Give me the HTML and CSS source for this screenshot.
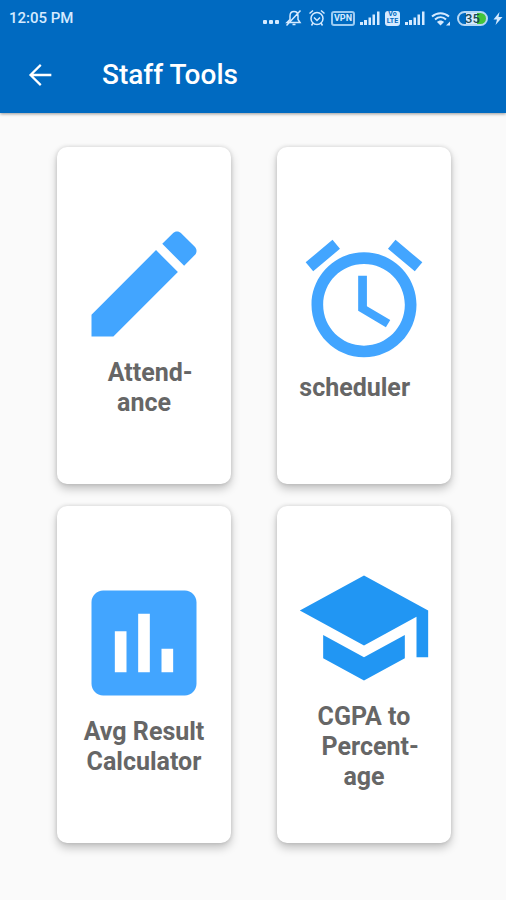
FILE: index.html
```html
<!DOCTYPE html>
<html lang="en">

<head>
    <meta charset="UTF-8">
    <meta name="viewport" content="width=device-width, initial-scale=1.0">
    <title>Staff Tools</title>
    <link rel="stylesheet" href="styles.css">
</head>

<body>
    <header class="header">
        <div class="status">
            <span class="status-time">12:05 PM</span>
            <div class="status-icons">
                <svg width="18" height="18" viewBox="0 0 18 18" fill="currentColor">
                    <rect x="1" y="11" width="4" height="4" rx="1" />
                    <rect x="7" y="11" width="4" height="4" rx="1" />
                    <rect x="13" y="11" width="4" height="4" rx="1" />
                </svg>
                <!-- muted bell -->
                <svg width="18" height="18" viewBox="0 0 18 18" fill="none" stroke="currentColor" stroke-width="1.5">
                    <path d="M2 13.500h13l-2-3V7c0-2.500-1.500-4.500-4-4.500S5 4.500 5 7v3.500zM7.500 15.500h3M1.500 16.500L15.500 1.500" />
                </svg>
                <!-- alarm -->
                <svg width="18" height="18" viewBox="0 0 18 18" fill="none" stroke="currentColor" stroke-width="1.5">
                    <circle cx="9" cy="9.500" r="6" />
                    <path d="M1.500 4.500L5 1.500M13 1.500l3.500 3M6 8.500l3 3L12 8.500M5 14l-1.500 2.500M13 14l1.500 2.500" />
                </svg>
                <span class="vpn">VPN</span>
                <svg width="20" height="18" viewBox="0 0 20 18" fill="currentColor">
                    <path d="M0 13h3v3H0zM4 11h3v5H4zM8.500 8.500h2.500V16H8.500zM12.500 5.500H15V16h-2.500zM17 2.500h2.500V16H17z" />
                </svg>
                <span class="volte"><span>Vo</span><span>LTE</span></span>
                <svg width="20" height="18" viewBox="0 0 20 18" fill="currentColor">
                    <path d="M0 13h3v3H0zM4 11h3v5H4zM8.500 8.500h2.500V16H8.500zM12.500 5.500H15V16h-2.500zM17 2.500h2.500V16H17z" />
                </svg>
                <!-- wifi -->
                <svg class="wifi" width="20" height="18" viewBox="0 0 20 18" fill="none" stroke="currentColor" stroke-width="2">
                    <path d="M1 7.500c5-4.500 12-4.500 17 0M4 10.500c3.500-3 8-3 11 0" />
                    <path d="M6 13c2-2 5-2 7 0l-3.500 3.500z" fill="currentColor" stroke="none" />
                    <path d="M15 16.500L19 12.500v4z" fill="currentColor" stroke="none" />
                </svg>
                <span class="battery">35</span>
                <svg width="10" height="18" viewBox="0 0 10 18" fill="currentColor">
                    <path d="M6.500 3L0.500 10.500h3.500L2.500 16L9.500 8H5.500z" />
                </svg>
            </div>
        </div>
        <div class="toolbar">
            <a class="back" href="#" aria-label="Back">
                <svg width="34" height="34" viewBox="0 0 24 24" fill="currentColor">
                    <path d="M20 11.200H7.300l5.800-5.800L12 4.200l-7.800 7.800 7.800 7.800 1.100-1.200L7.300 12.800H20z" />
                </svg>
            </a>
            <h1 class="title">Staff Tools</h1>
        </div>
    </header>
    <main class="grid">
        <a class="card" href="#">
            <svg class="card-icon" viewBox="0 0 24 24">
                <path d="M3 17.250V21h3.750L17.810 9.940l-3.750-3.750L3 17.250zM20.710 7.040c.39-.39.39-1.020 0-1.410l-2.340-2.340c-.39-.39-1.020-.39-1.410 0l-1.830 1.830 3.750 3.750 1.830-1.830z" />
            </svg>
            <span class="card-text">&nbsp;&nbsp;Attend-<br>ance</span>
        </a>
        <a class="card" href="#">
            <svg class="card-icon" viewBox="0 0 24 24">
                <path d="M22 5.720l-4.600-3.860-1.290 1.530 4.600 3.860L22 5.720zM7.880 3.390L6.600 1.860 2 5.710l1.290 1.530 4.590-3.850zM12.500 8H11v6l4.750 2.850.75-1.230-4-2.370V8zM12 4c-4.970 0-9 4.030-9 9s4.020 9 9 9c4.970 0 9-4.030 9-9s-4.030-9-9-9zm0 16c-3.870 0-7-3.130-7-7s3.130-7 7-7 7 3.130 7 7-3.130 7-7 7z" />
            </svg>
            <span class="card-text">scheduler&nbsp;&nbsp;&nbsp;</span>
        </a>
        <a class="card" href="#">
            <svg class="card-icon" viewBox="0 0 24 24">
                <path d="M19 3H5c-1.100 0-2 .9-2 2v14c0 1.100.9 2 2 2h14c1.100 0 2-.9 2-2V5c0-1.100-.9-2-2-2zM9 17H7v-7h2v7zm4 0h-2V7h2v10zm4 0h-2v-4h2v4z" />
            </svg>
            <span class="card-text">Avg Result<br>Calculator</span>
        </a>
        <a class="card" href="#">
            <svg class="card-icon card-icon-dark" viewBox="0 0 24 24">
                <path d="M5 13.180v4L12 21l7-3.820v-4L12 17l-7-3.820zM12 3L1 9l11 6 9-4.910V17h2V9L12 3z" />
            </svg>
            <span class="card-text">CGPA to<br>&nbsp;&nbsp;Percent-<br>age</span>
        </a>
    </main>
</body>

</html>
```

FILE: styles.css
```css
* {
    padding: 0;
    margin: 0;
    box-sizing: border-box;
    text-decoration: none;
}

body {
    background-color: #fafafa;
    font-family: Roboto, "Liberation Sans", sans-serif;
}

.header {
    color: #fff;
    background-color: #006ac1;
    box-shadow: 0 1px 3px rgba(0, 0, 0, .4);
}

.status {
    display: flex;
    justify-content: space-between;
    align-items: center;
    height: 36px;
    padding: 0 3px 0 9px;
    color: #d5eaff;
}

.status-time {
    font-size: 15px;
    font-weight: 500;
}

.status-icons {
    display: flex;
    align-items: center;
    gap: 5px;
}

.vpn {
    width: 24px;
    height: 15px;
    border: 2px solid #9ccbf2;
    border-radius: 3px;
    font-size: 9px;
    font-weight: 700;
    line-height: 11px;
    text-align: center;
}

.volte {
    display: flex;
    flex-direction: column;
    width: 15px;
    height: 15px;
    border-radius: 3px;
    color: #006ac1;
    background-color: #d5eaff;
    font-size: 7px;
    font-weight: 700;
    line-height: 7px;
    text-align: center;
}

.wifi {
    margin: 0 1px;
}

.battery {
    width: 31px;
    height: 15px;
    border: 2px solid #b5d8f5;
    border-radius: 8px;
    background: linear-gradient(to right, #006ac1 25%, #d5eaff 25%, #d5eaff 65%, #43c43a 65%);
    color: #1b4a5b;
    font-size: 13px;
    font-weight: 500;
    line-height: 11px;
    text-align: center;
}

.toolbar {
    display: flex;
    align-items: center;
    gap: 45px;
    height: 77px;
    padding: 0 23px;
}

.back {
    display: flex;
    color: #fff;
}

.title {
    font-size: 28px;
    font-weight: 500;
}

.grid {
    display: grid;
    grid-template-columns: 1fr 1fr;
    gap: 22px 46px;
    padding: 34px 55px 34px 57px;
}

.card {
    display: flex;
    flex-direction: column;
    align-items: center;
    justify-content: center;
    gap: 4px;
    min-height: 337px;
    border-radius: 10px;
    background-color: #fff;
    box-shadow: 0 5px 10px rgba(0, 0, 0, .22), 0 0 4px rgba(0, 0, 0, .14);
}

.card-icon {
    width: 140px;
    height: 140px;
    fill: #42a5ff;
}

.card-icon-dark {
    fill: #2196f3;
}

.card-text {
    color: #666;
    font-size: 25px;
    font-weight: 700;
    line-height: 30px;
    text-align: center;
}
```
